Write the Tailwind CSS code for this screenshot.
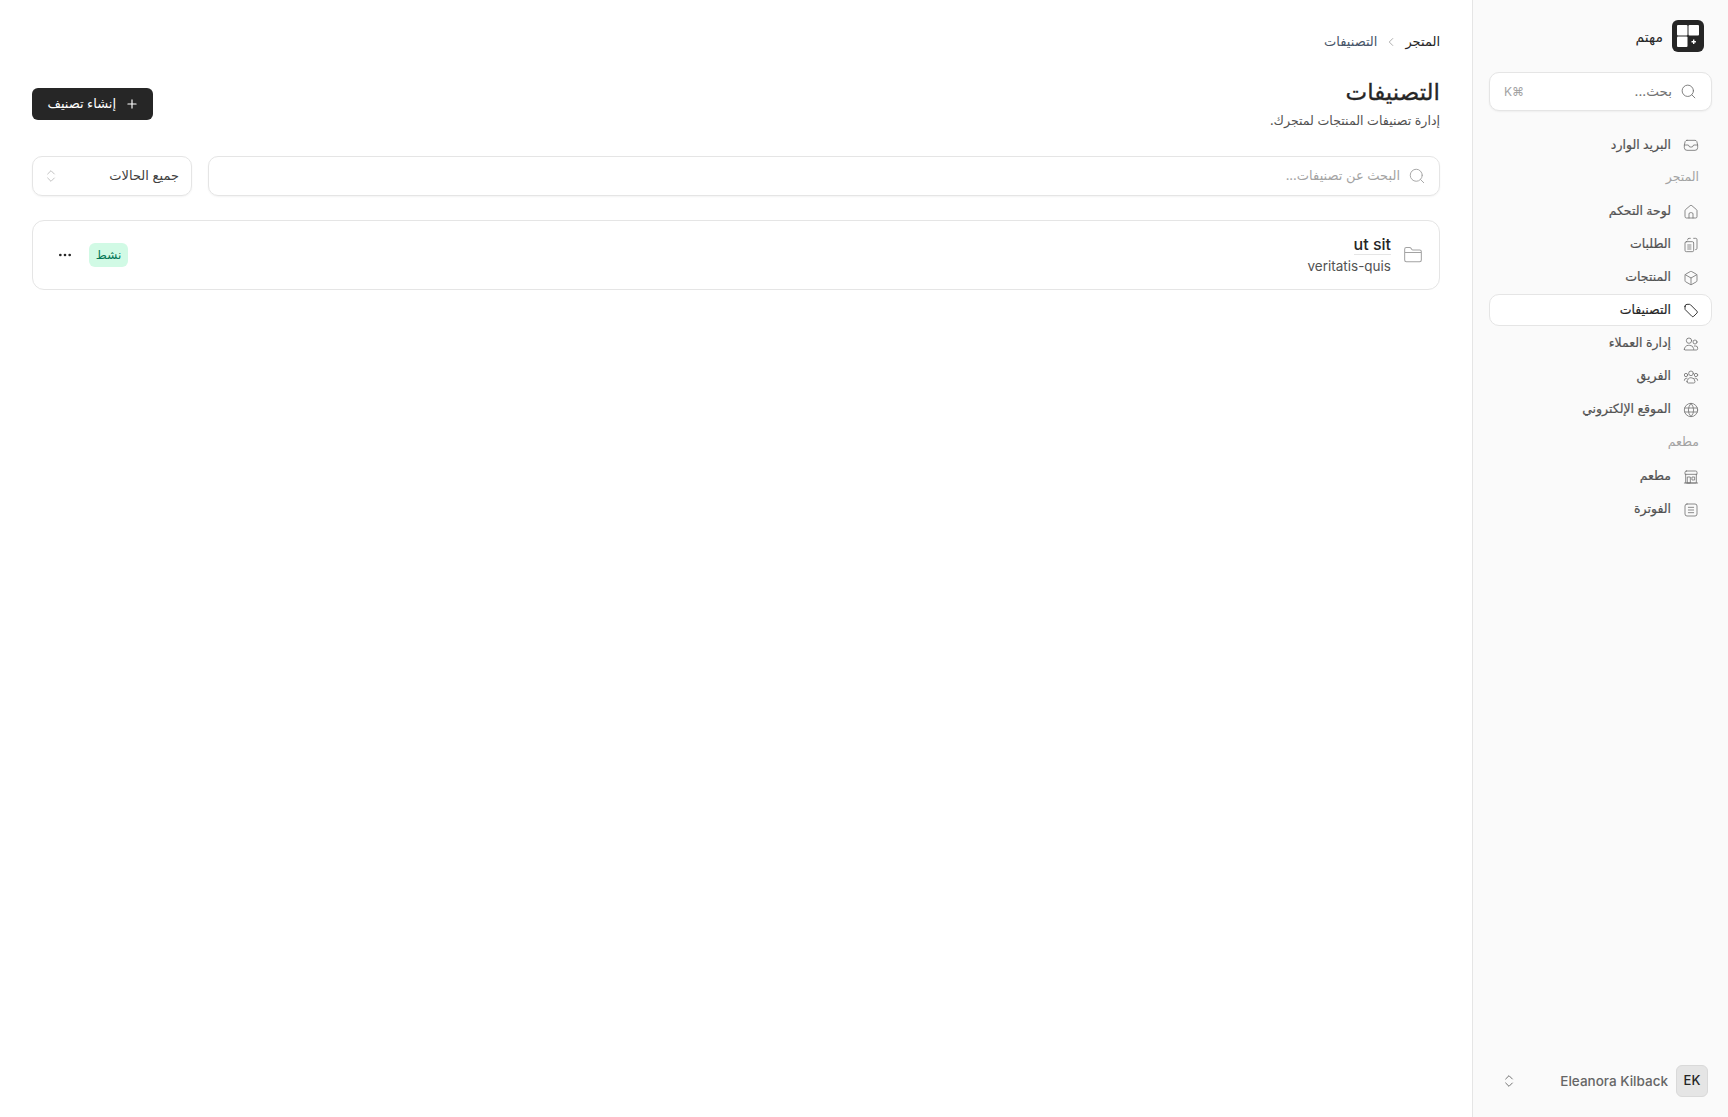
<!DOCTYPE html>
<html lang="ar" dir="rtl">
<head>
  <meta charset="UTF-8" />
  <title>التصنيفات</title>
  <script src="https://cdn.jsdelivr.net/npm/@tailwindcss/browser@4"></script>
</head>
<body class="bg-white text-[#262626] font-['Inter','Noto_Sans','DejaVu_Sans',sans-serif]">
<div class="flex h-[1117px] overflow-hidden">

  <!-- sidebar -->
  <aside class="w-[256px] shrink-0 bg-[#fafafa] border-l border-[#e5e5e5] flex flex-col px-[16px] pt-[20px] pb-[20px]">
    <div class="flex items-center gap-[9px] pr-[8px] h-[32px]">
      <div class="w-[32px] h-[32px] rounded-[6px] bg-[#262626] flex items-center justify-center">
        <svg width="22" height="22" viewBox="0 0 22 22" fill="#fff"><rect x="0" y="0" width="10.500" height="10.500" rx="1"/><rect x="11.500" y="0" width="10.500" height="10.500" rx="1"/><rect x="0" y="11.500" width="10.500" height="10.500" rx="1"/><path d="M14.500 16.800h4.400M16.700 14.600v4.400" stroke="#fff" stroke-width="1.400"/></svg>
      </div>
      <span class="text-[14px] font-medium">مهتم</span>
    </div>

    <div class="mt-[20px] h-[39px] rounded-[10px] bg-white border border-[#e5e5e5] shadow-xs flex items-center px-[14px] gap-[8px] text-[13.500px]">
      <svg class="w-[17px] h-[17px] text-[#737373]" viewBox="0 0 24 24" fill="none" stroke="currentColor" stroke-width="1.250" stroke-linecap="round"><circle cx="11" cy="11" r="8"/><path d="m21 21-4.300-4.300"/></svg>
      <span class="text-[#737373] flex-1">بحث...</span>
      <span class="text-[12px] text-[#a3a3a3]">⌘K</span>
    </div>

    <nav class="mt-[18px] flex flex-col text-[12.500px] font-medium text-[#525252] [-webkit-text-stroke:0.2px]">
      <a class="h-[32px] flex items-center gap-[12px] pr-[13px]">
        <svg class="w-[16px] h-[16px] text-[#737373]" viewBox="0 0 24 24" fill="none" stroke="currentColor" stroke-width="1.250" stroke-linecap="round" stroke-linejoin="round"><path d="M2 12h6l2 3h4l2-3h6"/><path d="M6 5h12a3 3 0 0 1 2.700 1.700L22 12v4a4 4 0 0 1-4 4H6a4 4 0 0 1-4-4v-4l1.300-5.300A3 3 0 0 1 6 5z"/></svg>
        البريد الوارد
      </a>
      <div class="h-[32px] flex items-center pr-[13px] text-[12.500px] font-normal text-[#a3a3a3] [-webkit-text-stroke:0]">المتجر</div>
      <a class="mt-[2px] h-[33px] flex items-center gap-[12px] pr-[13px]">
        <svg class="w-[16px] h-[16px] text-[#737373]" viewBox="0 0 24 24" fill="none" stroke="currentColor" stroke-width="1.250" stroke-linecap="round" stroke-linejoin="round"><path d="M15 21v-6a2 2 0 0 0-2-2h-2a2 2 0 0 0-2 2v6"/><path d="M3 10a2 2 0 0 1 .7-1.500l7-6a2 2 0 0 1 2.600 0l7 6A2 2 0 0 1 21 10v9a2 2 0 0 1-2 2H5a2 2 0 0 1-2-2z"/></svg>
        لوحة التحكم
      </a>
      <a class="h-[33px] flex items-center gap-[12px] pr-[13px]">
        <svg class="w-[16px] h-[16px] text-[#737373]" viewBox="0 0 24 24" fill="none" stroke="currentColor" stroke-width="1.250" stroke-linecap="round" stroke-linejoin="round"><rect x="3" y="7" width="13" height="15" rx="2"/><path d="M7 4.500V4a2 2 0 0 1 2-2h2M16 2h3a2 2 0 0 1 2 2v13a2 2 0 0 1-2 2M7 12h5M7 15h5M7 18h5"/></svg>
        الطلبات
      </a>
      <a class="h-[33px] flex items-center gap-[12px] pr-[13px]">
        <svg class="w-[16px] h-[16px] text-[#737373]" viewBox="0 0 24 24" fill="none" stroke="currentColor" stroke-width="1.250" stroke-linecap="round" stroke-linejoin="round"><path d="M21 8a2 2 0 0 0-1-1.700l-7-4a2 2 0 0 0-2 0l-7 4A2 2 0 0 0 3 8v8a2 2 0 0 0 1 1.700l7 4a2 2 0 0 0 2 0l7-4a2 2 0 0 0 1-1.700z"/><path d="m3.300 7 8.700 5 8.700-5M12 22V12"/></svg>
        المنتجات
      </a>
      <a class="h-[32px] mb-[1px] flex items-center gap-[12px] pr-[12px] bg-white border border-[#e5e5e5] rounded-[10px] text-[#262626]">
        <svg class="w-[16px] h-[16px]" viewBox="0 0 24 24" fill="none" stroke="currentColor" stroke-width="1.400" stroke-linecap="round" stroke-linejoin="round"><path d="M3 6.500v3.800a2 2 0 0 0 .6 1.400l9.700 9.700a2 2 0 0 0 2.800 0l4.800-4.800a2 2 0 0 0 0-2.800L11.200 4.100A2 2 0 0 0 9.800 3.500H6a3 3 0 0 0-3 3z"/></svg>
        التصنيفات
      </a>
      <a class="h-[33px] flex items-center gap-[12px] pr-[13px]">
        <svg class="w-[16px] h-[16px] text-[#737373]" viewBox="0 0 24 24" fill="none" stroke="currentColor" stroke-width="1.250" stroke-linecap="round" stroke-linejoin="round"><circle cx="9" cy="7" r="4"/><circle cx="18" cy="9" r="3"/><path d="M2 20a6 6 0 0 1 6-6h2a6 6 0 0 1 6 5v1a1 1 0 0 1-1 1H3a1 1 0 0 1-1-1z"/><path d="M17 15h2a3 3 0 0 1 3 3v1a2 2 0 0 1-2 2h-4"/></svg>
        إدارة العملاء
      </a>
      <a class="h-[33px] flex items-center gap-[12px] pr-[13px]">
        <svg class="w-[16px] h-[16px] text-[#737373]" viewBox="0 0 24 24" fill="none" stroke="currentColor" stroke-width="1.250" stroke-linecap="round" stroke-linejoin="round"><circle cx="12" cy="6.500" r="3.500"/><circle cx="4.500" cy="9" r="2.500"/><circle cx="19.500" cy="9" r="2.500"/><path d="M6 19a6 6 0 0 1 12 0 2 2 0 0 1-2 2H8a2 2 0 0 1-2-2zM2 17a3 3 0 0 1 3-3h1M22 17a3 3 0 0 0-3-3h-1"/></svg>
        الفريق
      </a>
      <a class="h-[33px] flex items-center gap-[12px] pr-[13px]">
        <svg class="w-[16px] h-[16px] text-[#737373]" viewBox="0 0 24 24" fill="none" stroke="currentColor" stroke-width="1.250" stroke-linecap="round" stroke-linejoin="round"><circle cx="12" cy="12" r="10"/><path d="M12 2a14.500 14.500 0 0 0 0 20 14.500 14.500 0 0 0 0-20M2.500 9h19M2.500 15h19"/></svg>
        الموقع الإلكتروني
      </a>
      <div class="h-[33px] mb-[1px] flex items-center pr-[13px] text-[12.500px] font-normal text-[#a3a3a3] [-webkit-text-stroke:0]">مطعم</div>
      <a class="h-[33px] flex items-center gap-[12px] pr-[13px]">
        <svg class="w-[16px] h-[16px] text-[#737373]" viewBox="0 0 24 24" fill="none" stroke="currentColor" stroke-width="1.250" stroke-linecap="round" stroke-linejoin="round"><path d="M5 3h14a2 2 0 0 1 2 2v3H3V5a2 2 0 0 1 2-2zM4 8v13h16V8M2 21h20"/><rect x="7" y="12" width="4" height="9"/><rect x="14" y="12" width="3.500" height="4.500"/></svg>
        مطعم
      </a>
      <a class="h-[33px] flex items-center gap-[12px] pr-[13px]">
        <svg class="w-[16px] h-[16px] text-[#737373]" viewBox="0 0 24 24" fill="none" stroke="currentColor" stroke-width="1.250" stroke-linecap="round" stroke-linejoin="round"><rect x="3" y="3" width="18" height="18" rx="3"/><path d="M8 8h8M8 12h8M8 16h8"/></svg>
        الفوترة
      </a>
    </nav>

    <div class="mt-auto h-[32px] flex items-center gap-[8px] pr-[4px]">
      <div class="w-[32px] h-[32px] rounded-[6px] bg-[#e5e5e5] border border-[#d9d9d9] flex items-center justify-center text-[13px] font-medium" dir="ltr">EK</div>
      <span class="text-[13.500px] font-medium text-[#666666]" dir="ltr">Eleanora Kilback</span>
      <svg class="w-[16px] h-[16px] mr-auto ml-[12px] text-[#737373]" viewBox="0 0 24 24" fill="none" stroke="currentColor" stroke-width="1.500" stroke-linecap="round" stroke-linejoin="round"><path d="m7 15 5 5 5-5M7 9l5-5 5 5"/></svg>
    </div>
  </aside>

  <!-- main -->
  <main class="flex-1 px-[32px] pt-[33px]">
    <div class="flex items-center gap-[7px] text-[13px] h-[18px]">
      <span class="text-[#262626]">المتجر</span>
      <svg class="w-[14px] h-[14px] text-[#a3a3a3]" viewBox="0 0 24 24" fill="none" stroke="currentColor" stroke-width="1.500" stroke-linecap="round" stroke-linejoin="round"><path d="m15 18-6-6 6-6"/></svg>
      <span class="text-[#475569]">التصنيفات</span>
    </div>

    <div class="mt-[26px] flex items-center justify-between">
      <div>
        <h1 class="text-[23px] leading-[30px] font-medium [-webkit-text-stroke:0.3px]">التصنيفات</h1>
        <p class="mt-[4px] text-[12.600px] leading-[20px] text-[#525252]">إدارة تصنيفات المنتجات لمتجرك.</p>
      </div>
      <button class="h-[32px] w-[121px] px-[14px] rounded-[6px] bg-[#262626] text-white text-[13px] font-medium whitespace-nowrap flex items-center gap-[9px]">
        <svg class="w-[14px] h-[14px]" viewBox="0 0 24 24" fill="none" stroke="currentColor" stroke-width="2" stroke-linecap="round"><path d="M5 12h14M12 5v14"/></svg>
        إنشاء تصنيف
      </button>
    </div>

    <div class="mt-[25px] flex gap-[16px]">
      <div class="flex-1 h-[40px] rounded-[10px] border border-[#e5e5e5] shadow-xs flex items-center gap-[8px] px-[13px] text-[13px] text-[#a3a3a3]">
        <svg class="w-[18px] h-[18px] text-[#a3a3a3]" viewBox="0 0 24 24" fill="none" stroke="currentColor" stroke-width="1.250" stroke-linecap="round"><circle cx="11" cy="11" r="8"/><path d="m21 21-4.300-4.300"/></svg>
        البحث عن تصنيفات...
      </div>
      <div class="w-[160px] h-[40px] rounded-[10px] border border-[#e5e5e5] shadow-xs flex items-center justify-between pr-[12px] pl-[10px] text-[13px] text-[#404040]">
        جميع الحالات
        <svg class="w-[16px] h-[16px] text-[#b5b5b5]" viewBox="0 0 24 24" fill="none" stroke="currentColor" stroke-width="1.250" stroke-linecap="round" stroke-linejoin="round"><path d="m7 15 5 5 5-5M7 9l5-5 5 5"/></svg>
      </div>
    </div>

    <div class="mt-[24px] h-[70px] rounded-[12px] border border-[#e5e5e5] flex items-center pr-[16px] pl-[15px]">
      <svg class="w-[20px] h-[20px] text-[#a3a3a3]" viewBox="0 0 24 24" fill="none" stroke="currentColor" stroke-width="1.250" stroke-linecap="round" stroke-linejoin="round"><path d="M20 20a2 2 0 0 0 2-2V8a2 2 0 0 0-2-2h-7.900a2 2 0 0 1-1.700-.9l-.8-1.200A2 2 0 0 0 7.900 3H4a2 2 0 0 0-2 2v13a2 2 0 0 0 2 2zM2 9h20"/></svg>
      <div class="mr-[12px] flex flex-col items-end" dir="ltr">
        <span class="text-[16px] leading-[20px] font-medium border-b border-[#e5e5e5]">ut sit</span>
        <span class="mt-[1px] text-[13.500px] leading-[20px] text-[#525252]">veritatis-quis</span>
      </div>
      <span class="mr-auto h-[24px] w-[39px] rounded-[6px] bg-[#d1fae5] text-[#047857] text-[12px] flex items-center justify-center">نشط</span>
      <svg class="mr-[16px] ml-[9px] w-[16px] h-[16px] text-[#262626]" viewBox="0 0 24 24" fill="currentColor"><circle cx="5" cy="12" r="2"/><circle cx="12" cy="12" r="2"/><circle cx="19" cy="12" r="2"/></svg>
    </div>
  </main>
</div>
</body>
</html>
